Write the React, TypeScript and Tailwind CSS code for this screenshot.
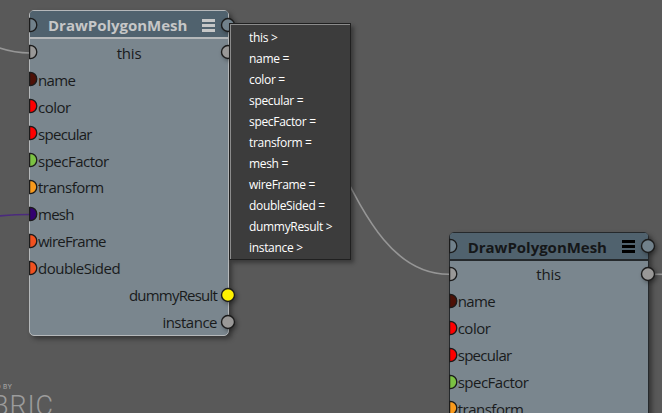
import React from "react";

type Row = { label: string; kind: "io" | "in" | "out"; color: string; track: string };

const rows: Row[] = [
  { label: "this", kind: "io", color: "#999897", track: "tracking-[-0.2px]" },
  { label: "name", kind: "in", color: "#4d1107", track: "tracking-[-0.6px]" },
  { label: "color", kind: "in", color: "#ff0000", track: "tracking-[-0.5px]" },
  { label: "specular", kind: "in", color: "#ff0000", track: "tracking-[-0.7px]" },
  { label: "specFactor", kind: "in", color: "#7bc143", track: "tracking-[-0.5px]" },
  { label: "transform", kind: "in", color: "#f99a1c", track: "tracking-[-0.5px]" },
  { label: "mesh", kind: "in", color: "#330070", track: "tracking-[-0.75px]" },
  { label: "wireFrame", kind: "in", color: "#f1511f", track: "tracking-[-0.75px]" },
  { label: "doubleSided", kind: "in", color: "#f1511f", track: "tracking-[-0.5px]" },
  { label: "dummyResult", kind: "out", color: "#fff200", track: "tracking-[-0.8px]" },
  { label: "instance", kind: "out", color: "#999897", track: "tracking-[-0.5px]" },
];

const menu = ["this >", "name =", "color =", "specular =", "specFactor =", "transform =", "mesh =", "wireFrame =", "doubleSided =", "dummyResult >", "instance >"];

function InPort({ color }: { color: string }) {
  return (
    <svg className="absolute left-0 top-1/2 -translate-y-1/2" width="9" height="16" viewBox="0 0 9 16">
      <path d="M.6 1.4H1.2A6.6 6.6 0 0 1 1.2 14.6H.6Z" fill={color} stroke="#1b1b1b" strokeWidth="1.3" />
    </svg>
  );
}

function OutPort({ color }: { color: string }) {
  return (
    <svg className="absolute -right-[7px] top-1/2 -translate-y-1/2 drop-shadow-[2px_2px_2px_rgba(0,0,0,0.35)]" width="16" height="16" viewBox="0 0 16 16">
      <circle cx="8" cy="8" r="6.5" fill={color} stroke="#1b1b1b" strokeWidth="1.4" />
    </svg>
  );
}

function GraphNode({ selected, place }: { selected: boolean; place: string }) {
  const edge = selected ? "border-[#b5b8ba]" : "border-[#25292c]";
  return (
    <section className={`absolute h-[326px] w-[200px] text-[#191b1c] ${place}`}>
      <div className={`h-full w-full rounded-[5px] border-[1.5px] bg-[#7a868e] shadow-[3px_3px_5px_rgba(0,0,0,0.4)] ${edge}`}>
        <div className={`h-[28px] rounded-t-[3px] border-b-2 bg-[#50626e] ${edge}`} />
      </div>
      <div className="absolute inset-0 flex flex-col">
        <header className="relative flex h-[29px] shrink-0 items-center justify-between pl-[19px] pr-[14px]">
          <InPort color="#71818b" />
          <h2 className={`pt-[2px] font-['Open_Sans',sans-serif] text-[15px] font-bold tracking-[-0.02px] ${selected ? "text-[#c6c7c7]" : "text-[#151719]"}`}>DrawPolygonMesh</h2>
          <span className={`flex flex-col gap-[2px] pt-px ${selected ? "text-[#c6c7c7]" : "text-black"}`}>
            <i className="h-[3px] w-[13px] bg-current" />
            <i className="h-[3px] w-[13px] bg-current" />
            <i className="h-[3px] w-[13px] bg-current" />
          </span>
          <OutPort color="#71818b" />
        </header>
        {rows.map((r) => (
          <div
            key={r.label}
            className={`relative flex h-[26.92px] shrink-0 items-center font-['Open_Sans',sans-serif] text-[15px] leading-[25px] ${r.track} ${r.kind === "io" ? "justify-center" : r.kind === "out" ? "justify-end pr-[12px]" : "pl-[9px]"}`}
          >
            {r.kind !== "out" && <InPort color={r.color} />}
            <span className="pt-[2px]">{r.label}</span>
            {r.kind !== "in" && <OutPort color={r.color} />}
          </div>
        ))}
      </div>
    </section>
  );
}

export default function App() {
  return (
    <main className="relative h-[413px] w-[662px] overflow-hidden bg-[#595959]">
      <div className="absolute -left-[4px] top-[383px] font-['Inter',sans-serif] text-[6.5px] font-medium leading-[9px] tracking-[0.3px] text-[#a0a0a0]">D BY</div>
      <div className="absolute -left-[8px] top-[389px] font-['Roboto',sans-serif] text-[27px] font-light leading-[34px] tracking-[0.9px] text-[#9c9c9c]">BRIC</div>
      <svg className="absolute inset-0" width="662" height="413" fill="none" strokeWidth="1.6">
        <path d="M-2 47.5C8 51 18 53 30 53" stroke="#969696" />
        <path d="M-2 216C10 215 20 214.5 30 214.5" stroke="#4b2a7d" />
        <path d="M228 53C337 53 340 274.3 449 274.3" stroke="#969696" />
        <path d="M648 274.3H664" stroke="#969696" />
      </svg>
      <GraphNode selected place="left-[29px] top-[10px]" />
      <GraphNode selected={false} place="left-[448.7px] top-[231.5px]" />
      <ul className="absolute left-[229px] top-[23px] h-[237px] w-[122px] border border-[#202020] bg-[#3c3c3c] pt-[3px] shadow-[inset_1px_1px_0_#8c8c8c,3px_3px_4px_rgba(0,0,0,0.35)]">
        {menu.map((m) => (
          <li key={m} className="flex h-[21px] items-center pl-[19px] font-['Open_Sans',sans-serif] text-[12px] leading-[21px] tracking-[-0.32px] text-white">
            {m}
          </li>
        ))}
      </ul>
    </main>
  );
}
